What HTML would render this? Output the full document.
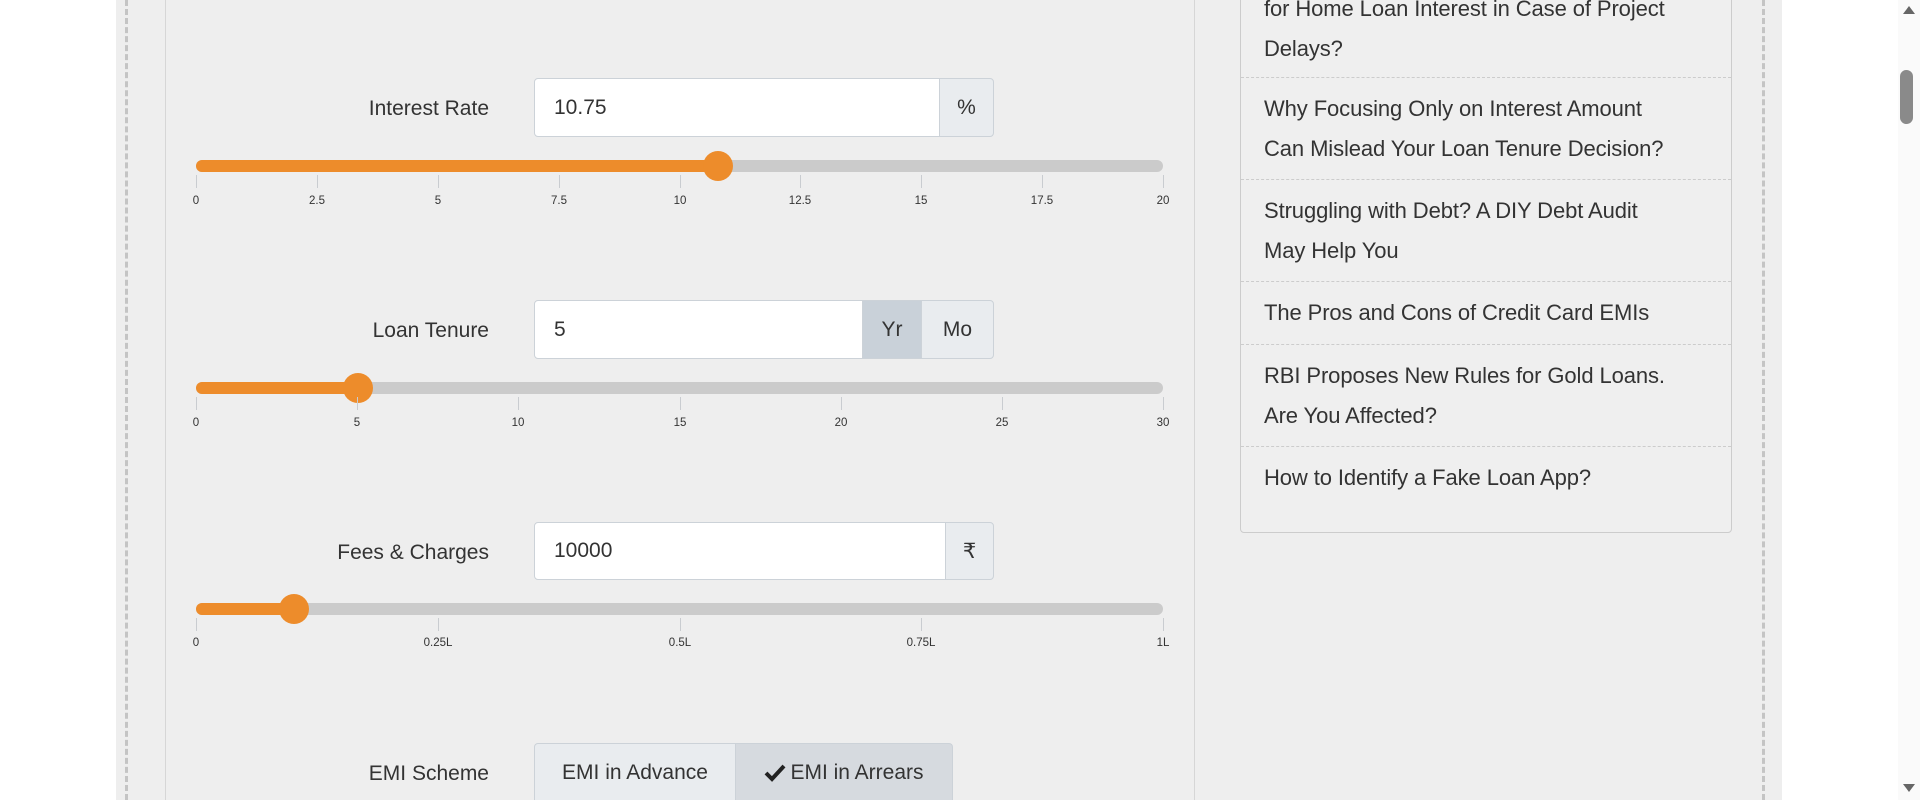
<!DOCTYPE html>
<html style="width:1920px;height:800px;overflow:hidden"><head><meta charset="utf-8"><style>
*{box-sizing:border-box;margin:0;padding:0}
body{width:1920px;height:800px;overflow:hidden;background:#fff;font-family:"Liberation Sans",sans-serif;color:#333;position:relative}
.a{position:absolute}
.page{left:116px;top:0;width:1666px;height:800px;background:#eee}
.dash{top:0;height:800px;border-left:3px dashed #c4c4c4}
.panel{left:165px;top:-10px;width:1030px;height:810px;border:1px solid #d6d6d6;border-bottom:none;background:#eee}
.lbl{width:300px;text-align:right;font-size:21px;left:189px}
.inp{background:#fff;border:1px solid #ccd2d8;border-radius:4px;font-size:21px;padding-left:19px;display:flex;align-items:center}
.add{background:#e9ecef;border:1px solid #ccd2d8;font-size:21px;display:flex;align-items:center;justify-content:center}
.track{left:196px;width:967px;height:12px;border-radius:6px;background:#cbcbcb}
.fill{height:12px;border-radius:6px;background:#ed8c2b;left:0;top:0}
.thumb{width:30px;height:30px;border-radius:50%;background:#ed8c2b}
.tick{width:1px;height:13px;background:#c9ccd0}
.tl{font-size:11.5px;width:60px;text-align:center;margin-left:-30px}
.rp{left:1240px;top:-10px;width:492px;height:543px;border:1px solid #ccc;border-radius:4px;background:#efefef}
.it{left:1264px;font-size:22px;line-height:40px;width:460px;letter-spacing:-0.1px}
.sep{left:1241px;width:490px;border-top:1px dashed #ccc}
.emi{align-items:flex-start;padding-top:17px;height:57px;border-bottom:none}
</style></head><body>
<div class="a page"></div>
<div class="a dash" style="left:125px"></div>
<div class="a dash" style="left:1762px"></div>
<div class="a panel"></div>

<div class="a lbl" style="top:97px">Interest Rate</div>
<div class="a inp" style="left:534px;top:78px;width:410px;height:59px;border-radius:4px 0 0 4px">10.75</div>
<div class="a add" style="left:939px;top:78px;width:55px;height:59px;border-radius:0 4px 4px 0">%</div>
<div class="a track" style="top:160px"><div class="a fill" style="width:522px"></div></div>
<div class="a thumb" style="left:703px;top:151px"></div>
<div class="a tick" style="left:196px;top:175px"></div><div class="a tick" style="left:317px;top:175px"></div><div class="a tick" style="left:438px;top:175px"></div><div class="a tick" style="left:559px;top:175px"></div><div class="a tick" style="left:680px;top:175px"></div><div class="a tick" style="left:800px;top:175px"></div><div class="a tick" style="left:921px;top:175px"></div><div class="a tick" style="left:1042px;top:175px"></div><div class="a tick" style="left:1163px;top:175px"></div>
<div class="a tl" style="left:196px;top:195px">0</div><div class="a tl" style="left:317px;top:195px">2.5</div><div class="a tl" style="left:438px;top:195px">5</div><div class="a tl" style="left:559px;top:195px">7.5</div><div class="a tl" style="left:680px;top:195px">10</div><div class="a tl" style="left:800px;top:195px">12.5</div><div class="a tl" style="left:921px;top:195px">15</div><div class="a tl" style="left:1042px;top:195px">17.5</div><div class="a tl" style="left:1163px;top:195px">20</div>

<div class="a lbl" style="top:319px">Loan Tenure</div>
<div class="a inp" style="left:534px;top:300px;width:330px;height:59px;border-radius:4px 0 0 4px">5</div>
<div class="a add" style="left:862px;top:300px;width:60px;height:59px;background:#c9d1d9">Yr</div>
<div class="a add" style="left:921px;top:300px;width:73px;height:59px;border-radius:0 4px 4px 0">Mo</div>
<div class="a track" style="top:382px"><div class="a fill" style="width:165px"></div></div>
<div class="a thumb" style="left:343px;top:373px"></div>
<div class="a tick" style="left:196px;top:397px"></div><div class="a tick" style="left:357px;top:397px"></div><div class="a tick" style="left:518px;top:397px"></div><div class="a tick" style="left:680px;top:397px"></div><div class="a tick" style="left:841px;top:397px"></div><div class="a tick" style="left:1002px;top:397px"></div><div class="a tick" style="left:1163px;top:397px"></div>
<div class="a tl" style="left:196px;top:417px">0</div><div class="a tl" style="left:357px;top:417px">5</div><div class="a tl" style="left:518px;top:417px">10</div><div class="a tl" style="left:680px;top:417px">15</div><div class="a tl" style="left:841px;top:417px">20</div><div class="a tl" style="left:1002px;top:417px">25</div><div class="a tl" style="left:1163px;top:417px">30</div>

<div class="a lbl" style="top:541px">Fees &amp; Charges</div>
<div class="a inp" style="left:534px;top:522px;width:414px;height:58px;border-radius:4px 0 0 4px">10000</div>
<div class="a add" style="left:945px;top:522px;width:49px;height:58px;border-radius:0 4px 4px 0">₹</div>
<div class="a track" style="top:603px"><div class="a fill" style="width:100px"></div></div>
<div class="a thumb" style="left:279px;top:594px"></div>
<div class="a tick" style="left:196px;top:618px"></div><div class="a tick" style="left:438px;top:618px"></div><div class="a tick" style="left:680px;top:618px"></div><div class="a tick" style="left:921px;top:618px"></div><div class="a tick" style="left:1163px;top:618px"></div>
<div class="a tl" style="left:196px;top:637px">0</div><div class="a tl" style="left:438px;top:637px">0.25L</div><div class="a tl" style="left:680px;top:637px">0.5L</div><div class="a tl" style="left:921px;top:637px">0.75L</div><div class="a tl" style="left:1163px;top:637px">1L</div>

<div class="a lbl" style="top:762px">EMI Scheme</div>
<div class="a add emi" style="left:534px;top:743px;width:202px;border-radius:4px 0 0 0">EMI in Advance</div>
<div class="a add emi" style="left:735px;top:743px;width:218px;background:#d6dadf;border-radius:0 4px 0 0"><svg width="22" height="18" viewBox="0 0 22 18" style="margin-right:4px;margin-top:3px"><path d="M2 9 L8 15 L20 2" fill="none" stroke="#222" stroke-width="4"/></svg>EMI in Arrears</div>

<div class="a rp"></div>
<div class="a it" style="top:-11px">for Home Loan Interest in Case of Project<br>Delays?</div>
<div class="a sep" style="top:77px"></div>
<div class="a it" style="top:89px">Why Focusing Only on Interest Amount<br>Can Mislead Your Loan Tenure Decision?</div>
<div class="a sep" style="top:179px"></div>
<div class="a it" style="top:191px">Struggling with Debt? A DIY Debt Audit<br>May Help You</div>
<div class="a sep" style="top:281px"></div>
<div class="a it" style="top:293px">The Pros and Cons of Credit Card EMIs</div>
<div class="a sep" style="top:344px"></div>
<div class="a it" style="top:356px">RBI Proposes New Rules for Gold Loans.<br>Are You Affected?</div>
<div class="a sep" style="top:446px"></div>
<div class="a it" style="top:458px">How to Identify a Fake Loan App?</div>

<div class="a" style="left:1898px;top:0;width:22px;height:800px;background:#fafafa"></div>
<div class="a" style="left:1900px;top:70px;width:13px;height:54px;border-radius:7px;background:#8a8a8a"></div>
<div class="a" style="left:1903px;top:6px;width:0;height:0;border-left:6px solid transparent;border-right:6px solid transparent;border-bottom:8px solid #666"></div>
<div class="a" style="left:1903px;top:784px;width:0;height:0;border-left:6px solid transparent;border-right:6px solid transparent;border-top:8px solid #666"></div>
</body></html>
